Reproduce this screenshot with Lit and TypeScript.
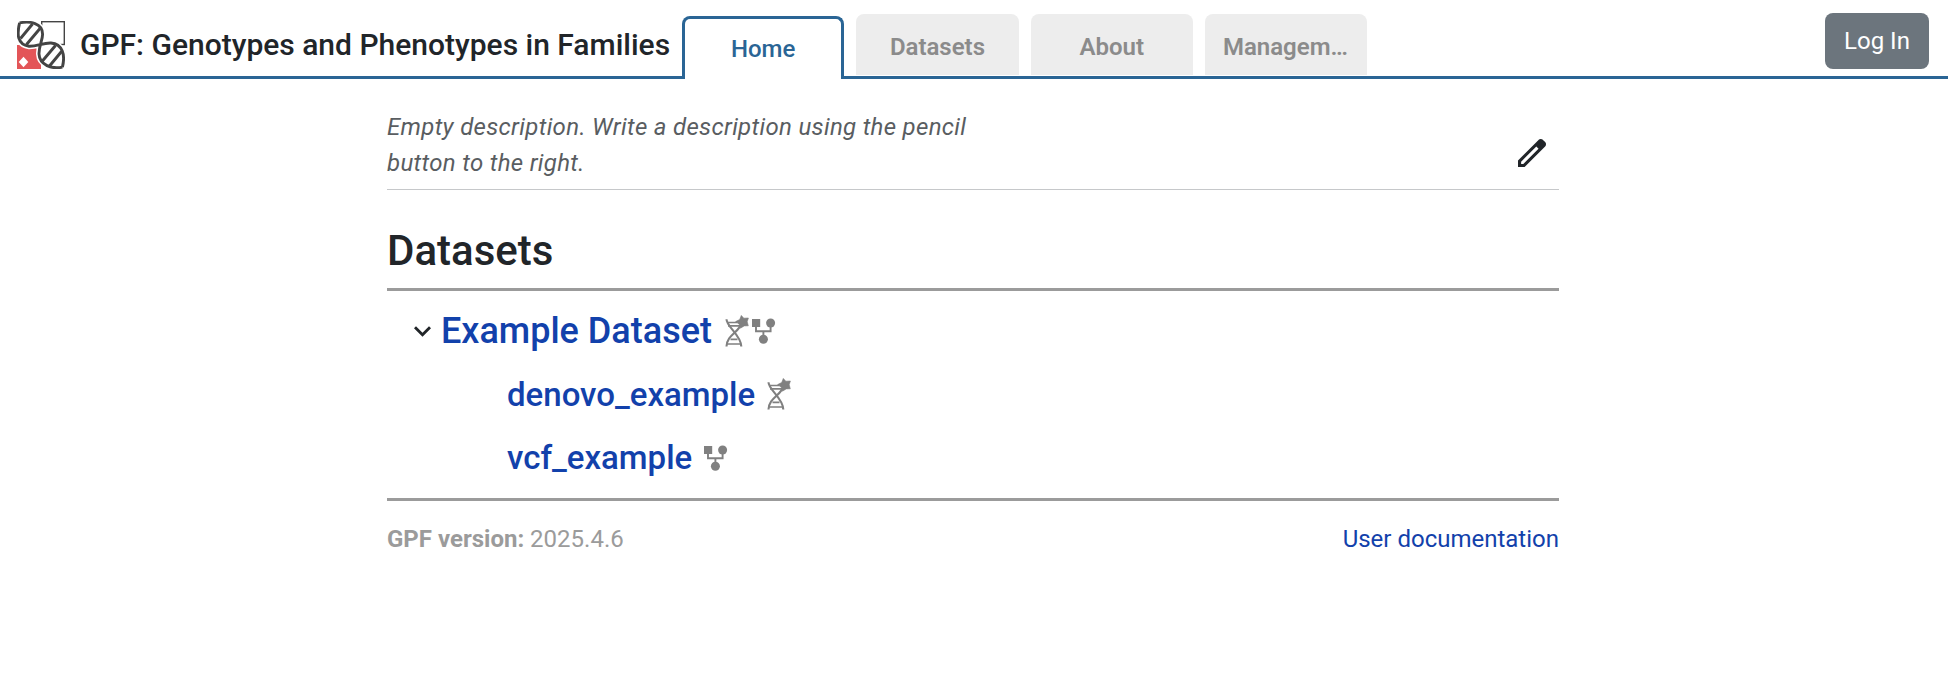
import { LitElement, html, css, svg } from "lit";
import { customElement, property } from "lit/decorators.js";
import { classMap } from "lit/directives/class-map.js";

type Tool = "denovo" | "pedigree";

interface Dataset {
  name: string;
  tools: Tool[];
  children?: Dataset[];
}

const TABS = ["Home", "Datasets", "About", "Management"];

const DATASETS: Dataset[] = [
  {
    name: "Example Dataset",
    tools: ["denovo", "pedigree"],
    children: [
      { name: "denovo_example", tools: ["denovo"] },
      { name: "vcf_example", tools: ["pedigree"] },
    ],
  },
];

@customElement("gpf-logo")
class GpfLogo extends LitElement {
  static styles = css`
    :host { display: block; width: 48px; height: 48px; }
    svg { display: block; }
  `;

  render() {
    const first = "M2.6 1.9C13-.2 25.6 2 25.6 13.2C25.6 19 21.8 25 22 33C22.500 44 35 48.500 45.400 46.100";
    const second = "M2.600 1.900C-.2 13 .2 23.500 12 25.200C20 25.500 26 21.600 34 22C45.500 23 48.500 34 45.400 46.100";
    return html`
      <svg width="48" height="48" viewBox="0 0 48 48" fill="none">
        ${svg`
          <rect x="24.700" y=".7" width="22.600" height="22.800" stroke="#444" stroke-width="1.400"/>
          <path d="M0 24H24V48H0Z" fill="#e35558"/>
          <path d="M6.500 35.700L11.300 41L6.500 46.300L1.700 41Z" fill="#fff"/>
          <path d=${first + second} stroke="#fff" stroke-width="6"/>
          <path d="M2.600 1.900C13 0 25.600 2 25.600 13.200C25.600 20 21 24.500 12 25.200C1 23.500 0 13 2.600 1.900Z" fill="#fff"/>
          <path d="M45.400 46.100C35 48.500 22.500 45 22 33C22 27 26 22 34 22C45.500 23 48.500 34 45.400 46.100Z" fill="#fff"/>
          <path d="M3.500 17.500L15.500 3M9.500 23.500L23 7.500M44.500 30.500L32.500 45M38.500 24.500L25 40.500" stroke="#444" stroke-width="2.900"/>
          <path d=${first + second} stroke="#444" stroke-width="2.900" stroke-linejoin="round"/>
        `}
      </svg>
    `;
  }
}

@customElement("tool-icon")
class ToolIcon extends LitElement {
  @property() tool: Tool = "denovo";

  static styles = css`
    :host { display: block; color: #808080; }
    svg { display: block; }
  `;

  render() {
    if (this.tool === "denovo") {
      return html`
        <svg width="24" height="33" viewBox="0 0 24 33" fill="none">
          <path d="M1.500 4.300C1.500 12 16.300 20 16.300 31.600M16.300 8C15 17 1.500 20 1.500 31.600"
            stroke="currentColor" stroke-width="2.100"/>
          <path d="M2 7.500H12M3 10.800H15M5.500 24.400H12.500M2 29H16"
            stroke="currentColor" stroke-width="1.700"/>
          <path d="M16.300 .4L18.800 3.200L23.400 3L22.200 6.700L23.300 10.800L19.200 10.900L15.500 13.200L14.400 9.400L10.600 6.600L14.700 4.500Z"
            fill="currentColor" stroke="currentColor" stroke-width=".6" stroke-linejoin="round"/>
        </svg>
      `;
    }
    return html`
      <svg width="24" height="26" viewBox="0 0 24 26" fill="none">
        <path d="M0 1H8.200V9H0Z" fill="currentColor"/>
        <circle cx="18.600" cy="5" r="4.500" fill="currentColor"/>
        <circle cx="11.400" cy="21.300" r="4.500" fill="currentColor"/>
        <path d="M4 8V13.300H18.600V8M11.400 13.300V18" stroke="currentColor" stroke-width="1.900"/>
      </svg>
    `;
  }
}

@customElement("app-root")
class AppRoot extends LitElement {
  static styles = css`
    :host {
      display: block;
      min-height: 698px;
      background: #fff;
      color: #212529;
      font: 400 24px/36px Roboto, sans-serif;
    }
    * { box-sizing: border-box; }
    a { color: #1241ab; text-decoration: none; }
    svg { display: block; }

    .header {
      display: flex;
      height: 79px;
      padding: 0 19px 0 17px;
      border-bottom: 3px solid #2a6595;
    }
    .logo { margin: 21px 15px 0 0; }
    .title {
      width: 602px;
      padding-top: 27px;
      font-size: 30px;
      font-weight: 500;
      white-space: nowrap;
    }
    .tabs { display: flex; gap: 12px; flex: 1; }
    .tab {
      width: 162.300px;
      height: 61px;
      margin-top: 14px;
      padding: 15px 18px 0;
      border-radius: 8px 8px 0 0;
      background: #ededed;
      color: #8b8b8b;
      font-weight: 600;
      text-align: center;
      overflow: hidden;
      text-overflow: ellipsis;
      white-space: nowrap;
    }
    .tab.active {
      height: 63px;
      margin: 16px 0 -3px;
      padding-top: 12px;
      border: 3px solid #2a6595;
      border-bottom: 0;
      background: #fff;
      color: #2a6595;
      font-weight: 500;
    }
    .login {
      width: 104px;
      height: 56px;
      margin-top: 13px;
      padding: 0;
      border: 0;
      border-radius: 8px;
      background: #6c757d;
      color: #fff;
      font: inherit;
    }

    .content { width: 1172px; margin: 0 389px 0 387px; }
    .about {
      display: flex;
      justify-content: space-between;
      height: 111px;
      padding: 30px 13px 0 0;
      border-bottom: 1px solid #c6c8ca;
    }
    .description {
      width: 600px;
      margin: 0;
      color: #595d61;
      font-style: italic;
      letter-spacing: .32px;
    }
    .pencil { margin-top: 30px; }
    .heading {
      height: 101px;
      margin: 0;
      padding-top: 36px;
      border-bottom: 3px solid #9b9b9b;
      font-size: 42px;
      font-weight: 500;
      line-height: 50px;
    }
    .tree { height: 210px; padding-top: 8px; border-bottom: 3px solid #9b9b9b; }
    .row { display: flex; align-items: center; height: 63px; font-weight: 500; }
    .parent { height: 64px; padding-left: 27px; font-size: 36px; }
    .child { padding-left: 120px; font-size: 33px; }
    .chevron { margin-right: 10px; }
    .tools { display: flex; align-items: center; gap: 3px; margin-left: 13px; }
    .child .tools { margin-left: 12px; }
    .footer { display: flex; justify-content: space-between; padding-top: 20px; color: #9b9b9b; }
    .label { font-weight: 700; }
  `;

  private renderDataset(dataset: Dataset, nested = false): unknown {
    return html`
      <div class=${classMap({ row: true, parent: !nested, child: nested })}>
        ${dataset.children
          ? html`<svg class="chevron" width="17" height="11" viewBox="6 8.590 12 7.410">
              <path d="M16.590 8.590L12 13.170 7.410 8.590 6 10l6 6 6-6z" fill="#212529"/>
            </svg>`
          : ""}
        <a>${dataset.name}</a>
        <span class="tools">
          ${dataset.tools.map((tool) => html`<tool-icon .tool=${tool}></tool-icon>`)}
        </span>
      </div>
      ${dataset.children?.map((child) => this.renderDataset(child, true))}
    `;
  }

  render() {
    return html`
      <header class="header">
        <gpf-logo class="logo"></gpf-logo>
        <div class="title">GPF: Genotypes and Phenotypes in Families</div>
        <nav class="tabs">
          ${TABS.map((tab, i) => html`<a class=${classMap({ tab: true, active: i === 0 })}>${tab}</a>`)}
        </nav>
        <button class="login">Log In</button>
      </header>
      <main class="content">
        <section class="about">
          <p class="description">Empty description. Write a description using the pencil button to the right.</p>
          <svg class="pencil" width="28" height="28" viewBox="120 -840 720 720">
            <path fill="#212529" d="M200-200h57l391-391-57-57-391 391v57Zm-80 80v-170l528-527q12-11 26.500-17t30.500-6q16 0 31 6t26 18l55 56q12 11 17.500 26t5.500 30q0 16-5.500 30.500T817-647L290-120H120Z"/>
          </svg>
        </section>
        <h1 class="heading">Datasets</h1>
        <section class="tree">${DATASETS.map((dataset) => this.renderDataset(dataset))}</section>
        <footer class="footer">
          <span><span class="label">GPF version:</span> 2025.4.6</span>
          <a>User documentation</a>
        </footer>
      </main>
    `;
  }
}
